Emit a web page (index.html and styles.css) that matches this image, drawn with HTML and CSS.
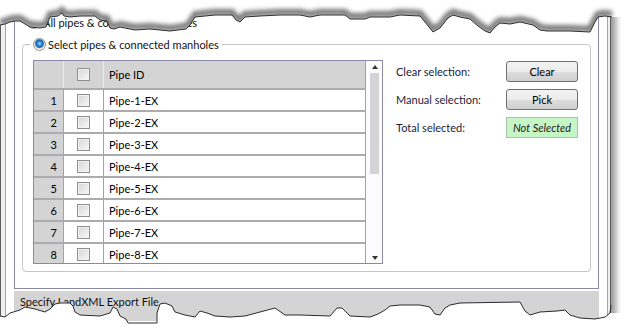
FILE: index.html
```html
<!DOCTYPE html>
<html lang="en">
<head>
    <meta charset="UTF-8">
    <title>Export LandXML</title>
    <link rel="stylesheet" href="styles.css">
</head>
<body>
    <div class="window">
        <div class="frame">
            <div class="panel">
                <div class="option">
                    <span class="radio"></span>
                    <span>All pipes &amp; connected manholes</span>
                </div>

                <fieldset class="group">
                    <legend class="option">
                        <span class="radio checked"></span>
                        <span>Select pipes &amp; connected manholes</span>
                    </legend>
                    <div class="group-body">
                        <div class="grid">
                            <div class="grid-body">
                                <div class="row head">
                                    <div class="cell num"></div>
                                    <div class="cell check"><span class="checkbox"></span></div>
                                    <div class="cell pipe">Pipe ID</div>
                                </div>
                                <div class="row"><div class="cell num">1</div><div class="cell check"><span class="checkbox"></span></div><div class="cell pipe">Pipe-1-EX</div></div>
                                <div class="row"><div class="cell num">2</div><div class="cell check"><span class="checkbox"></span></div><div class="cell pipe">Pipe-2-EX</div></div>
                                <div class="row"><div class="cell num">3</div><div class="cell check"><span class="checkbox"></span></div><div class="cell pipe">Pipe-3-EX</div></div>
                                <div class="row"><div class="cell num">4</div><div class="cell check"><span class="checkbox"></span></div><div class="cell pipe">Pipe-4-EX</div></div>
                                <div class="row"><div class="cell num">5</div><div class="cell check"><span class="checkbox"></span></div><div class="cell pipe">Pipe-5-EX</div></div>
                                <div class="row"><div class="cell num">6</div><div class="cell check"><span class="checkbox"></span></div><div class="cell pipe">Pipe-6-EX</div></div>
                                <div class="row"><div class="cell num">7</div><div class="cell check"><span class="checkbox"></span></div><div class="cell pipe">Pipe-7-EX</div></div>
                                <div class="row"><div class="cell num">8</div><div class="cell check"><span class="checkbox"></span></div><div class="cell pipe">Pipe-8-EX</div></div>
                            </div>
                            <div class="scroll">
                                <span class="arrow up"></span>
                                <span class="thumb"></span>
                                <span class="arrow down"></span>
                            </div>
                        </div>

                        <div class="actions">
                            <div class="action">
                                <span class="label">Clear selection:</span>
                                <button class="btn">Clear</button>
                            </div>
                            <div class="action">
                                <span class="label">Manual selection:</span>
                                <button class="btn">Pick</button>
                            </div>
                            <div class="action">
                                <span class="label">Total selected:</span>
                                <span class="status">Not Selected</span>
                            </div>
                        </div>
                    </div>
                </fieldset>
            </div>

            <div class="section-bar">Specify LandXML Export File</div>
        </div>
    </div>

    <!-- torn paper edges of the screenshot -->
    <svg class="torn" width="628" height="327" viewBox="0 0 628 327">
        <defs>
            <clipPath id="topClip">
                <polygon points="0,0 0,25 5,24 10,22 15,21 20,21 25,24 30,27 40,28 46,27 48,22 50,17 58,16 62,13 64,16 70,17 80,16 95,16 100,20 107,21 110,28 114,29 120,27 135,30 150,29 170,31 186,29 190,25 195,17 205,16 215,15 232,15 236,20 240,22 245,17 260,16 280,15 300,15 310,17 320,15 345,15 350,19 365,19 370,17 390,17 400,15 420,16 425,22 433,32 440,28 448,18 453,15 460,17 470,19 478,26 485,31 490,33 495,27 500,23 510,24 520,22 533,25 540,30 547,31 570,31 590,32 595,22 598,17 605,16 612,17 628,17 628,0"/>
            </clipPath>
            <filter id="soft" x="-5%" y="-50%" width="110%" height="200%">
                <feGaussianBlur stdDeviation="2.2"/>
            </filter>
        </defs>

        <polygon fill="#fff" points="0,0 0,25 5,24 10,22 15,21 20,21 25,24 30,27 40,28 46,27 48,22 50,17 58,16 62,13 64,16 70,17 80,16 95,16 100,20 107,21 110,28 114,29 120,27 135,30 150,29 170,31 186,29 190,25 195,17 205,16 215,15 232,15 236,20 240,22 245,17 260,16 280,15 300,15 310,17 320,15 345,15 350,19 365,19 370,17 390,17 400,15 420,16 425,22 433,32 440,28 448,18 453,15 460,17 470,19 478,26 485,31 490,33 495,27 500,23 510,24 520,22 533,25 540,30 547,31 570,31 590,32 595,22 598,17 605,16 612,17 628,17 628,0"/>
        <g clip-path="url(#topClip)">
            <polyline class="shade" filter="url(#soft)" transform="translate(0,-3)" points="0,25 5,24 10,22 15,21 20,21 25,24 30,27 40,28 46,27 48,22 50,17 58,16 62,13 64,16 70,17 80,16 95,16 100,20 107,21 110,28 114,29 120,27 135,30 150,29 170,31 186,29 190,25 195,17 205,16 215,15 232,15 236,20 240,22 245,17 260,16 280,15 300,15 310,17 320,15 345,15 350,19 365,19 370,17 390,17 400,15 420,16 425,22 433,32 440,28 448,18 453,15 460,17 470,19 478,26 485,31 490,33 495,27 500,23 510,24 520,22 533,25 540,30 547,31 570,31 590,32 595,22 598,17 605,16 612,17"/>
        </g>
        <polyline class="edge" points="0,25 5,24 10,22 15,21 20,21 25,24 30,27 40,28 46,27 48,22 50,17 58,16 62,13 64,16 70,17 80,16 95,16 100,20 107,21 110,28 114,29 120,27 135,30 150,29 170,31 186,29 190,25 195,17 205,16 215,15 232,15 236,20 240,22 245,17 260,16 280,15 300,15 310,17 320,15 345,15 350,19 365,19 370,17 390,17 400,15 420,16 425,22 433,32 440,28 448,18 453,15 460,17 470,19 478,26 485,31 490,33 495,27 500,23 510,24 520,22 533,25 540,30 547,31 570,31 590,32 595,22 598,17 605,16 612,17"/>

        <polygon fill="#fff" points="0,316 5,317 10,313 20,310 25,307 35,309 45,312 50,309 55,304 60,303 70,303 73,306 75,312 80,315 100,316 110,313 113,307 117,309 120,316 126,319 128,323 157,323 157,313 160,304 165,303 172,306 175,312 185,315 195,317 200,311 207,313 215,316 230,317 245,316 275,308 285,315 300,315 330,316 337,308 342,308 350,316 370,317 378,314 385,310 390,306 400,305 420,305 430,307 435,314 440,315 445,308 450,305 460,303 520,302 525,311 530,315 540,312 557,311 565,310 570,315 580,318 595,319 605,317 610,313 628,313 628,327 0,327"/>
        <polyline class="edge" points="0,316 5,317 10,313 20,310 25,307 35,309 45,312 50,309 55,304 60,303 70,303 73,306 75,312 80,315 100,316 110,313 113,307 117,309 120,316 126,319 128,323 157,323 157,313 160,304 165,303 172,306 175,312 185,315 195,317 200,311 207,313 215,316 230,317 245,316 275,308 285,315 300,315 330,316 337,308 342,308 350,316 370,317 378,314 385,310 390,306 400,305 420,305 430,307 435,314 440,315 445,308 450,305 460,303 520,302 525,311 530,315 540,312 557,311 565,310 570,315 580,318 595,319 605,317 610,313 611,305"/>
    </svg>
</body>
</html>
```
FILE: styles.css
```css
* {
    box-sizing: border-box;
}
body {
    margin: 0;
    height: 327px;
    position: relative;
    overflow: hidden;
    background: #fff;
    font-family: Lato, "Open Sans", sans-serif;
    font-size: 11px;
    color: #111;
}

/* window chrome */
.window {
    width: 611px;
    height: 327px;
    padding: 0 2px 0 4px;
    border-left: 1px solid #5a5a5a;
    border-right: 1px solid #5a5a5a;
    background: #f0f0f0;
    box-shadow: 6px 0 6px -1px rgba(0, 0, 0, 0.4);
}
.frame {
    height: 100%;
    padding: 0 8px;
    border-left: 1px solid #a3a3a3;
    border-right: 1px solid #a3a3a3;
    background: #fff;
}
.panel {
    padding: 14px 7px 16px;
    border: 1px solid #8b89a8;
    border-top: none;
}

/* radio options */
.option {
    display: flex;
    align-items: center;
    gap: 3px;
    height: 16px;
    padding-left: 5px;
}
.radio {
    width: 13px;
    height: 13px;
    border-radius: 50%;
    border: 1px solid #8e8f8f;
    background: radial-gradient(circle at 50% 50%, #e6e6e6 0, #f6f6f6 6px);
}
.radio.checked {
    background: radial-gradient(circle at 50% 42%, #9bdcff 0, #2f95e0 2px, #0f5fae 3.8px, #9aa7b2 4.4px, #e4e4e4 5px, #f7f7f7 6px);
}

/* group box */
.group {
    margin: 6px 0 0;
    padding: 8px 12px 7px 10px;
    border: 1px solid #c6c6c6;
    border-radius: 4px;
}
.group legend {
    margin-left: -3px;
    padding: 0 3px;
    gap: 2px;
}
.group-body {
    display: flex;
    align-items: flex-start;
}

/* data grid */
.grid {
    display: flex;
    width: 350px;
    height: 204px;
    border: 1px solid #8b89a8;
}
.grid-body {
    flex: 1;
    overflow: hidden;
    border-right: 1px solid #a3a3a3;
}
.row {
    display: grid;
    grid-template-columns: 30px 40px 1fr;
    height: 22px;
    border-bottom: 2px solid #acacb0;
    background: #fff;
}
.row.head {
    height: 29px;
    background: #d4d4d4;
}
.cell {
    display: flex;
    align-items: center;
    color: #000;
}
.num {
    justify-content: flex-end;
    padding-right: 6px;
    background: #d4d4d4;
    border-right: 1px solid #a3a3a3;
}
.check {
    justify-content: center;
    border-right: 1px solid #a3a3a3;
}
.head .num,
.head .check {
    border-right-color: #ececec;
}
.pipe {
    padding-left: 5px;
}
.checkbox {
    width: 13px;
    height: 13px;
    border: 1px solid #8f8f8f;
    background: linear-gradient(135deg, #d6d6d6, #f8f8f8);
    box-shadow: inset 0 0 0 1px #f2f2f2;
}

/* scroll bar */
.scroll {
    width: 16px;
    display: flex;
    flex-direction: column;
    align-items: center;
    padding: 4px 0 3px 1px;
    background: #fcfcfc;
}
.arrow {
    width: 0;
    height: 0;
    border-left: 3.5px solid transparent;
    border-right: 3.5px solid transparent;
}
.arrow.up {
    border-bottom: 4px solid #333;
}
.arrow.down {
    margin-top: auto;
    border-top: 4px solid #333;
}
.thumb {
    width: 9px;
    height: 101px;
    margin-top: 4px;
    background: #d4d4d4;
}

/* right hand actions */
.actions {
    width: 182px;
    margin-left: 13px;
    padding-top: 1px;
    display: flex;
    flex-direction: column;
    gap: 7px;
}
.action {
    display: flex;
    align-items: center;
    justify-content: space-between;
    height: 21px;
}
.label {
    color: #1c1c3a;
}
.btn {
    width: 72px;
    height: 21px;
    padding: 0;
    font: inherit;
    color: #000;
    border: 1px solid #707070;
    border-radius: 3px;
    background: linear-gradient(#f3f3f3, #ebebeb 50%, #dddddd 51%, #d0d0d0);
}
.status {
    width: 72px;
    height: 21px;
    display: flex;
    align-items: center;
    justify-content: center;
    font-style: italic;
    color: #222;
    background: #c6f6c6;
    border: 1px solid #a9c4a9;
}

/* lower section header */
.section-bar {
    margin-top: 2px;
    height: 30px;
    padding: 3px 6px;
    line-height: 16px;
    background: #d4d4d4;
    color: #111;
}

.torn {
    position: absolute;
    top: 0;
    left: 0;
    pointer-events: none;
}
.torn .edge {
    fill: none;
    stroke: #2c2c2c;
    stroke-width: 1;
}
.torn .shade {
    fill: none;
    stroke: #777;
    stroke-width: 6;
}
```
